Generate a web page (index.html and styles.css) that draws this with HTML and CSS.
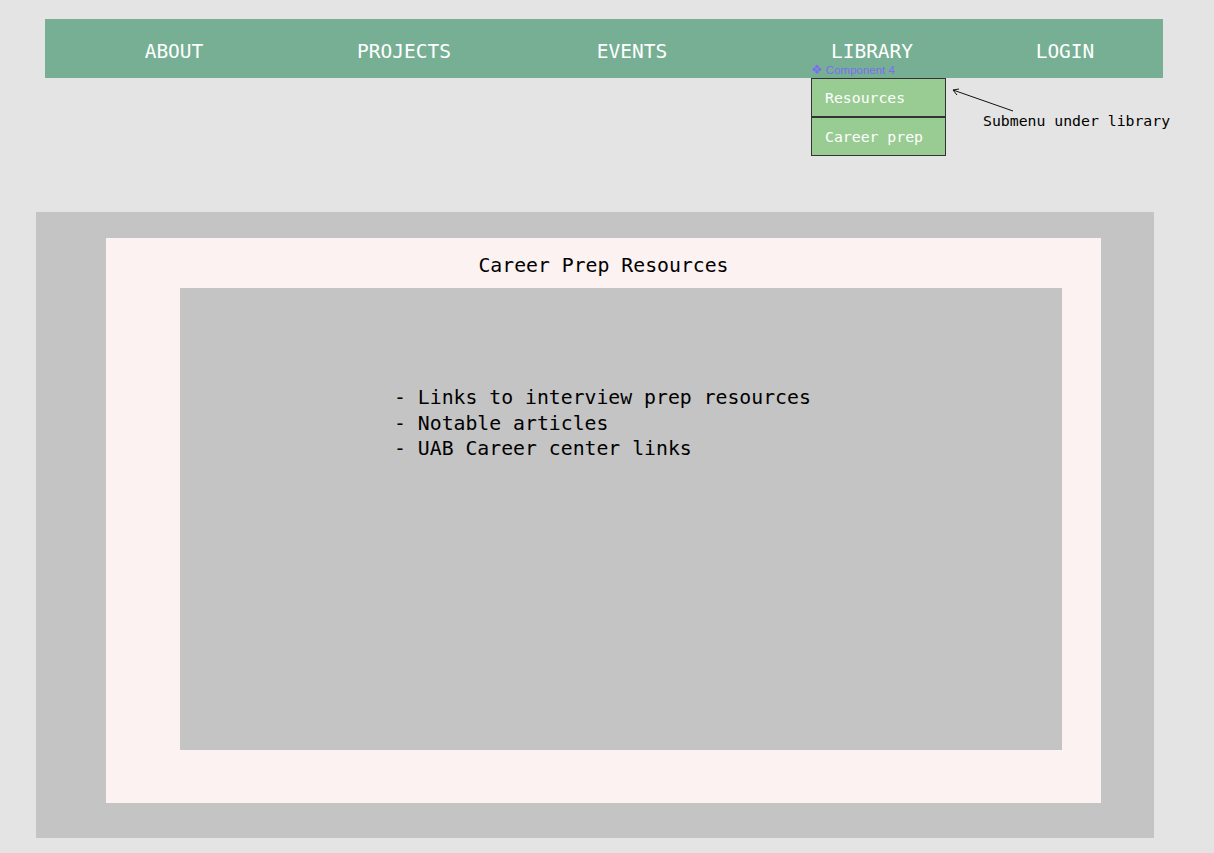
FILE: index.html
```html
<!DOCTYPE html>
<html>
<head>
<meta charset="utf-8">
<link rel="stylesheet" href="styles.css">
</head>
<body>
<div class="canvas">
  <nav class="nav">
    <a class="nav-item c1">ABOUT</a>
    <a class="nav-item c2">PROJECTS</a>
    <a class="nav-item c3">EVENTS</a>
    <a class="nav-item c4">LIBRARY</a>
    <a class="nav-item c5">LOGIN</a>
    <div class="component-label"><span class="comp-icon">❖</span> Component 4</div>
    <div class="submenu">
      <div class="sub-item">Resources</div>
      <div class="sub-item">Career prep</div>
    </div>
  </nav>
  <svg class="arrow" width="70" height="30" viewBox="0 0 70 30">
    <line x1="62" y1="24" x2="2" y2="3" stroke="#111" stroke-width="1"/>
    <polyline points="8,2 2,3 6,8" fill="none" stroke="#111" stroke-width="1"/>
  </svg>
  <div class="note">Submenu under library</div>

  <section class="outer">
    <div class="panel">
      <h1 class="title">Career Prep Resources</h1>
      <div class="content">
        <ul class="list">
          <li>- Links to interview prep resources</li>
          <li>- Notable articles</li>
          <li>- UAB Career center links</li>
        </ul>
      </div>
    </div>
  </section>
</div>
</body>
</html>
```

FILE: styles.css
```css
html, body {
  margin: 0;
  padding: 0;
  background: #e4e4e4;
}
.canvas {
  position: relative;
  width: 1214px;
  height: 853px;
  overflow: hidden;
  font-family: "DejaVu Sans Mono", "Liberation Mono", monospace;
}
.nav {
  position: relative;
  margin: 19px 0 0 45px;
  width: 1118px;
  height: 59px;
  background: #76af94;
  display: grid;
  grid-template-columns: 258px 202px 254px 226px 160px 18px;
  align-items: center;
}
.nav-item {
  text-align: center;
  color: #ffffff;
  font-size: 19.5px;
  line-height: 24px;
  padding-top: 7px;
}
.component-label {
  position: absolute;
  left: 766px;
  top: 44px;
  font-family: "Liberation Sans", Arial, sans-serif;
  font-size: 11.5px;
  line-height: 13px;
  color: #7d6cf0;
  white-space: nowrap;
}
.comp-icon {
  font-family: "DejaVu Sans", sans-serif;
  font-size: 13px;
}
.submenu {
  position: absolute;
  left: 766px;
  top: 59px;
  width: 135px;
  display: flex;
  flex-direction: column;
}
.sub-item {
  box-sizing: border-box;
  height: 39px;
  border: 1px solid #333333;
  background: #99cc93;
  color: #ffffff;
  font-size: 14.8px;
  line-height: 37px;
  padding-left: 13px;
  white-space: nowrap;
}
.arrow {
  position: absolute;
  left: 951px;
  top: 87px;
}
.note {
  position: absolute;
  left: 983px;
  top: 112px;
  font-size: 14.8px;
  line-height: 18px;
  color: #000000;
  white-space: nowrap;
}
.outer {
  margin: 134px 0 0 36px;
  width: 1118px;
  height: 626px;
  box-sizing: border-box;
  padding: 26px 0 0 70px;
  background: #c4c4c4;
}
.panel {
  width: 995px;
  height: 565px;
  box-sizing: border-box;
  background: #fcf2f1;
  padding: 16px 0 0 74px;
}
.title {
  margin: 0 0 10px -74px;
  font-size: 19.8px;
  line-height: 24px;
  font-weight: normal;
  text-align: center;
  color: #000000;
}
.content {
  width: 882px;
  height: 462px;
  box-sizing: border-box;
  background: #c4c4c4;
  padding: 97px 0 0 214px;
}
.list {
  list-style: none;
  margin: 0;
  padding: 0;
  font-size: 19.8px;
  line-height: 25.5px;
  color: #000000;
}
.list li {
  white-space: pre;
}
```
